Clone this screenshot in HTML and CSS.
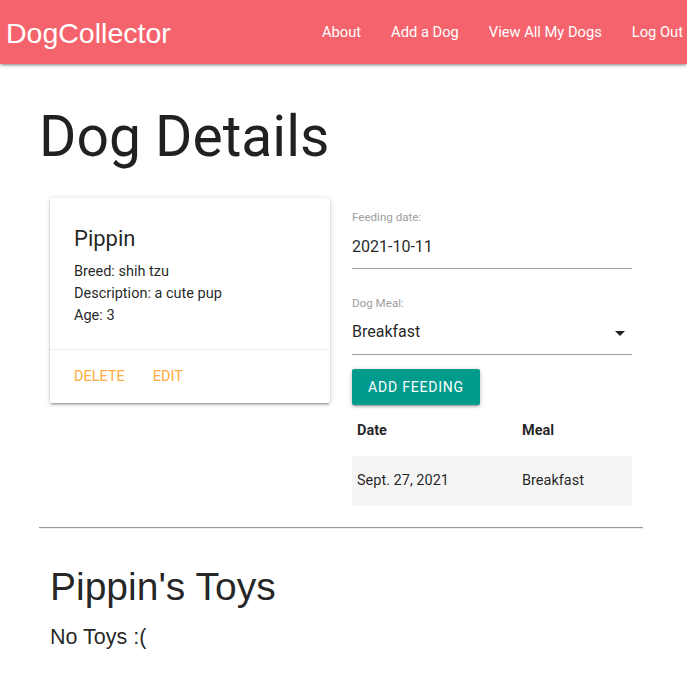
FILE: index.html
```html
<!DOCTYPE html>
<html lang="en">
<head>
<meta charset="utf-8">
<title>DogCollector</title>
<link rel="stylesheet" href="styles.css">
</head>
<body>
<nav class="navbar">
  <a class="brand" href="#">DogCollector</a>
  <ul class="nav-links">
    <li><a href="#">About</a></li>
    <li><a href="#">Add a Dog</a></li>
    <li><a href="#">View All My Dogs</a></li>
    <li><a href="#">Log Out</a></li>
  </ul>
</nav>
<main class="container">
  <h1 class="page-title">Dog Details</h1>
  <div class="row">
    <div class="col">
      <div class="card">
        <div class="card-content">
          <span class="card-title">Pippin</span>
          <p>Breed: shih tzu</p>
          <p>Description: a cute pup</p>
          <p>Age: 3</p>
        </div>
        <div class="card-action">
          <a href="#">Delete</a>
          <a href="#">Edit</a>
        </div>
      </div>
    </div>
    <div class="col">
      <form class="feed-form">
        <label class="field-label">Feeding date:</label>
        <div class="field-input">2021-10-11</div>
        <label class="field-label second">Dog Meal:</label>
        <div class="field-input select">
          <span>Breakfast</span>
          <svg class="caret" width="24" height="24" viewBox="0 0 24 24"><path d="M7 10l5 5 5-5z" fill="#212121"/></svg>
        </div>
        <button type="button" class="btn">Add Feeding</button>
      </form>
      <table class="striped">
        <thead>
          <tr><th class="c1">Date</th><th>Meal</th></tr>
        </thead>
        <tbody>
          <tr><td class="c1">Sept. 27, 2021</td><td>Breakfast</td></tr>
        </tbody>
      </table>
    </div>
  </div>
  <hr class="divider">
  <div class="toys">
    <h3 class="toys-title">Pippin's Toys</h3>
    <h5 class="toys-empty">No Toys :(</h5>
  </div>
</main>
</body>
</html>
```
FILE: styles.css
```css
* { box-sizing: border-box; }
html, body { margin: 0; padding: 0; }
body {
  font-family: Roboto, "Liberation Sans", sans-serif;
  font-size: 14.5px;
  line-height: 1.5;
  color: rgba(0,0,0,0.87);
  background: #fff;
}
a { text-decoration: none; }

.navbar {
  height: 64px;
  background: #f5646c;
  display: flex;
  align-items: center;
  justify-content: space-between;
  box-shadow: 0 2px 2px 0 rgba(0,0,0,.14), 0 3px 1px -2px rgba(0,0,0,.12), 0 1px 5px 0 rgba(0,0,0,.2);
}
.brand {
  color: #fff;
  font-family: "Liberation Sans", Arial, sans-serif;
  font-size: 28.5px;
  line-height: 64px;
  padding-left: 6px;
  padding-top: 2px;
}
.nav-links {
  list-style: none;
  margin: 0;
  padding: 0 4px 0 0;
  display: flex;
  gap: 30px;
}
.nav-links a {
  color: #fff;
  font-size: 14.7px;
  line-height: 64px;
  display: block;
}

.container {
  width: 604px;
  margin-left: 39px;
}
.page-title {
  font-weight: 400;
  font-size: 57px;
  line-height: 64px;
  margin: 41px 0 29px 0;
}

.row {
  display: flex;
  margin-bottom: 21px;
}
.col {
  width: 50%;
  padding: 0 11px;
}

.card {
  background: #fff;
  border-radius: 2px;
  box-shadow: 0 2px 2px 0 rgba(0,0,0,.14), 0 3px 1px -2px rgba(0,0,0,.12), 0 1px 5px 0 rgba(0,0,0,.2);
}
.card-content { padding: 25px 24px 23px; }
.card-title {
  display: block;
  font-size: 22px;
  line-height: 32px;
  margin-bottom: 6px;
}
.card-content p { margin: 0; }
.card-action {
  border-top: 1px solid rgba(160,160,160,0.2);
  padding: 16px 24px;
  line-height: 21px;
  display: flex;
  gap: 28px;
}
.card-action a {
  color: #ffab40;
  text-transform: uppercase;
}

.feed-form { display: flex; flex-direction: column; align-items: flex-start; }
.field-label {
  font-size: 11.6px;
  line-height: 14px;
  color: #9e9e9e;
  margin-top: 12px;
}
.field-label.second { margin-top: 27px; }
.field-input {
  align-self: stretch;
  height: 45px;
  font-size: 16px;
  line-height: 46px;
  border-bottom: 1px solid #9e9e9e;
}
.field-input.select {
  display: flex;
  justify-content: space-between;
  align-items: center;
}
.caret { display: block; margin-top: 1px; }
.btn {
  margin-top: 14px;
  height: 36px;
  padding: 0 16px;
  border: none;
  border-radius: 2px;
  background: #009b8d;
  color: #fff;
  font-family: Roboto, sans-serif;
  font-size: 14px;
  letter-spacing: .8px;
  text-transform: uppercase;
  box-shadow: 0 2px 2px 0 rgba(0,0,0,.14), 0 3px 1px -2px rgba(0,0,0,.12), 0 1px 5px 0 rgba(0,0,0,.2);
}

table.striped {
  width: 100%;
  border-collapse: collapse;
  margin-top: 1px;
}
table.striped th, table.striped td {
  text-align: left;
  padding: 15px 5px;
  line-height: 20px;
  font-size: 14.5px;
}
table.striped th { font-weight: 700; }
table.striped .c1 { width: 165px; }
table.striped tbody tr:nth-child(odd) { background: #f5f5f5; }

.divider {
  margin: 0;
  height: 0;
  border: none;
  border-top: 1px solid #9a9a9a;
  border-bottom: 1px solid #eee;
}

.toys { padding: 0 11px; }
.toys-title {
  font-family: "Liberation Sans", Arial, sans-serif;
  font-weight: 400;
  font-size: 39px;
  line-height: 42px;
  margin: 37px 0 0 0;
}
.toys-empty {
  font-family: "Liberation Sans", Arial, sans-serif;
  font-weight: 400;
  font-size: 21.5px;
  line-height: 26px;
  margin: 16px 0 0 0;
}
```
